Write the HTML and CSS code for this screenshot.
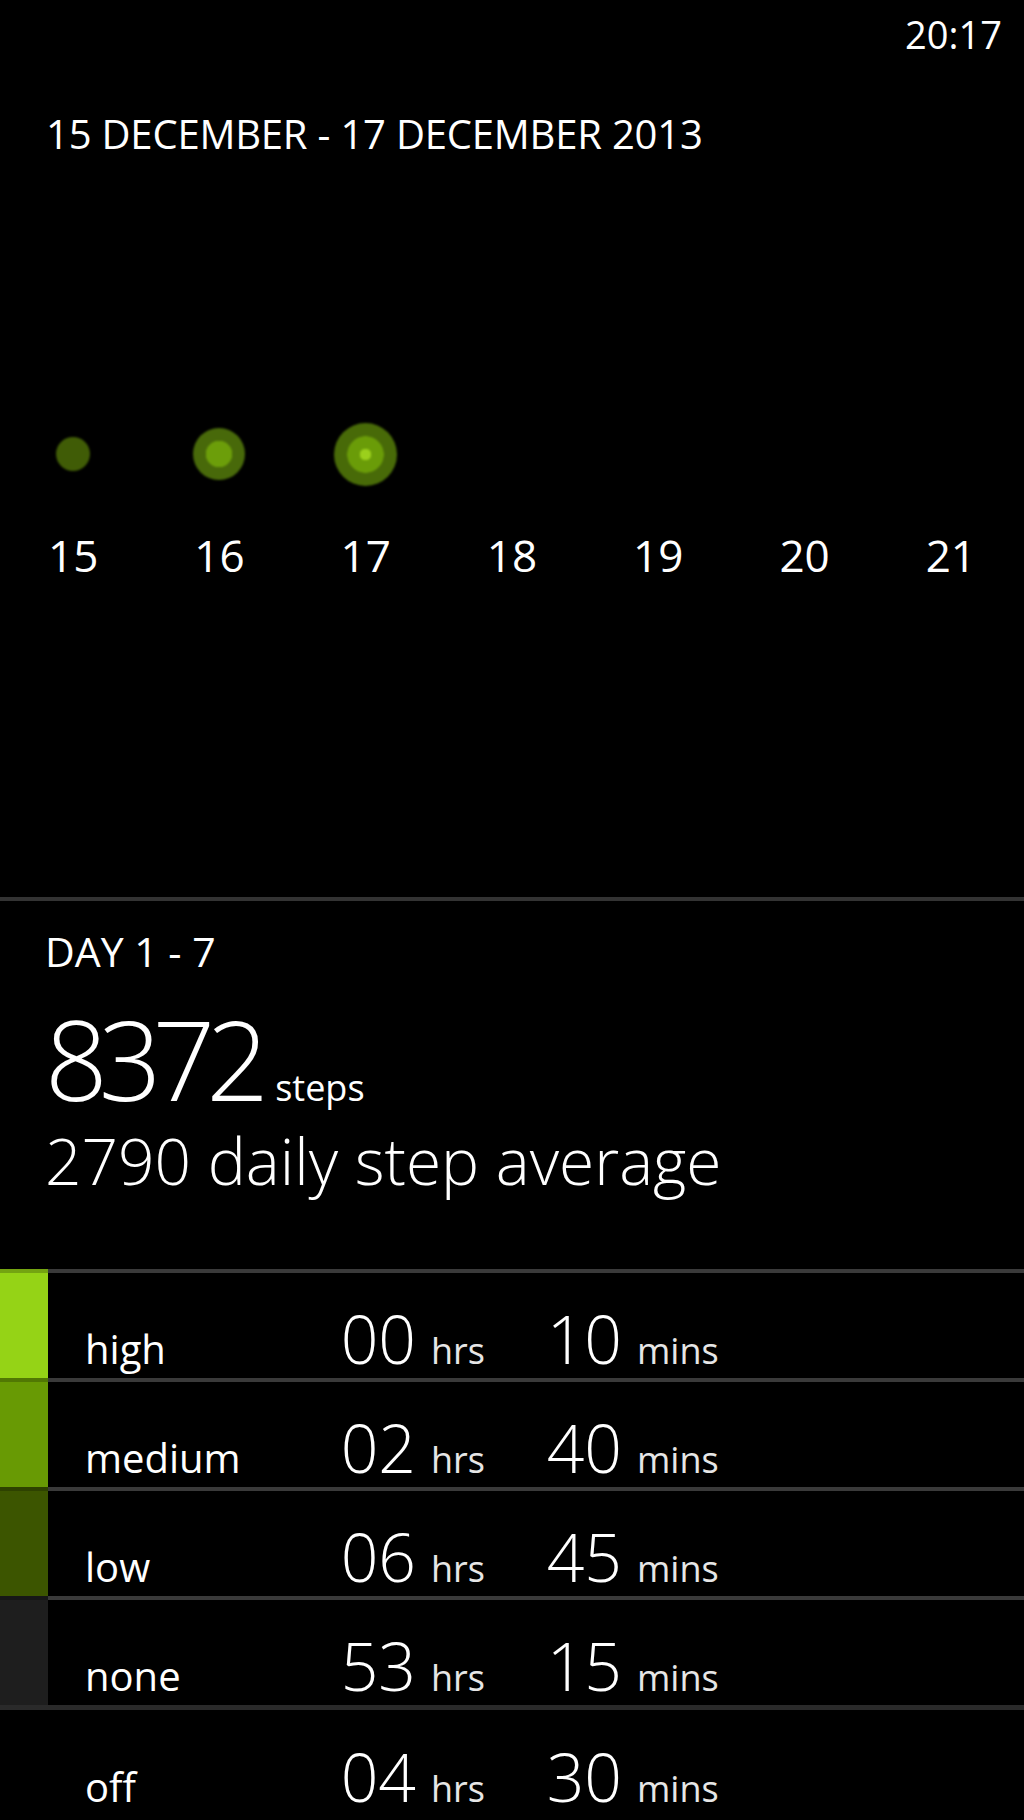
FILE: index.html
```html
<!DOCTYPE html>
<html lang="en">
<head>
  <meta charset="UTF-8">
  <meta name="viewport" content="width=device-width, initial-scale=1.0">
  <title>Activity - Week</title>
  <link rel="stylesheet" href="styles.css">
</head>
<body>
  <div class="phone">
    <div class="status-bar">
      <span class="clock">20:17</span>
    </div>

    <section class="week">
      <h1 class="range">15 DECEMBER - 17 DECEMBER 2013</h1>
      <div class="days">
        <div class="day">
          <div class="dot-cell"><span class="dot dot-1"></span></div>
          <span class="day-num">15</span>
        </div>
        <div class="day">
          <div class="dot-cell"><span class="dot dot-2"></span></div>
          <span class="day-num">16</span>
        </div>
        <div class="day">
          <div class="dot-cell"><span class="dot dot-3"></span></div>
          <span class="day-num">17</span>
        </div>
        <div class="day">
          <div class="dot-cell"></div>
          <span class="day-num">18</span>
        </div>
        <div class="day">
          <div class="dot-cell"></div>
          <span class="day-num">19</span>
        </div>
        <div class="day">
          <div class="dot-cell"></div>
          <span class="day-num">20</span>
        </div>
        <div class="day">
          <div class="dot-cell"></div>
          <span class="day-num">21</span>
        </div>
      </div>
    </section>

    <section class="summary">
      <div class="period">DAY 1 - 7</div>
      <div class="total"><span class="total-num">8372</span><span class="total-unit">steps</span></div>
      <div class="average">2790 daily step average</div>
    </section>

    <section class="activity">
      <div class="row">
        <div class="bar bar-high"></div>
        <div class="row-body">
          <span class="level">high</span>
          <span class="num">00</span><span class="unit unit-hrs">hrs</span>
          <span class="num">10</span><span class="unit unit-mins">mins</span>
        </div>
      </div>
      <div class="row">
        <div class="bar bar-medium"></div>
        <div class="row-body">
          <span class="level">medium</span>
          <span class="num">02</span><span class="unit unit-hrs">hrs</span>
          <span class="num">40</span><span class="unit unit-mins">mins</span>
        </div>
      </div>
      <div class="row">
        <div class="bar bar-low"></div>
        <div class="row-body">
          <span class="level">low</span>
          <span class="num">06</span><span class="unit unit-hrs">hrs</span>
          <span class="num">45</span><span class="unit unit-mins">mins</span>
        </div>
      </div>
      <div class="row">
        <div class="bar bar-none"></div>
        <div class="row-body">
          <span class="level">none</span>
          <span class="num">53</span><span class="unit unit-hrs">hrs</span>
          <span class="num">15</span><span class="unit unit-mins">mins</span>
        </div>
      </div>
      <div class="row row-off">
        <div class="bar"></div>
        <div class="row-body">
          <span class="level">off</span>
          <span class="num">04</span><span class="unit unit-hrs">hrs</span>
          <span class="num">30</span><span class="unit unit-mins">mins</span>
        </div>
      </div>
    </section>
  </div>
</body>
</html>
```

FILE: styles.css
```css
body {
  margin: 0;
  background-color: #000;
  color: #fff;
  font-family: 'Open Sans', 'Noto Sans', sans-serif;
}

.phone {
  width: 1024px;
  min-height: 1820px;
  overflow: hidden;
}

/* status bar */
.status-bar {
  display: flex;
  justify-content: flex-end;
  padding: 15px 22px 0 0;
}

.clock {
  font-size: 38px;
  line-height: 1;
}

/* week chart */
.week {
  padding-bottom: 320px;
  border-bottom: 4px solid #333;
}

.range {
  margin: 61px 0 0 46px;
  font-size: 40px;
  font-weight: 400;
  line-height: 1;
  letter-spacing: -0.2px;
}

.days {
  display: grid;
  grid-template-columns: repeat(7, 1fr);
  margin-top: 265px;
}

.day {
  display: flex;
  flex-direction: column;
  align-items: center;
}

.dot-cell {
  height: 70px;
  display: flex;
  align-items: center;
  justify-content: center;
}

.dot {
  border-radius: 50%;
  filter: blur(0.8px);
}

.dot-1 {
  width: 34px;
  height: 34px;
  background: #405c06;
}

.dot-2 {
  width: 52px;
  height: 52px;
  background: radial-gradient(circle, #6c9e0a 0 13px, #48690a 13.5px);
}

.dot-3 {
  width: 63px;
  height: 63px;
  background: radial-gradient(circle, #9bd01c 0 5.5px, #6a9c08 6px 18px, #486a08 18.5px);
}

.day-num {
  margin-top: 44px;
  font-size: 44px;
  line-height: 1;
}

/* summary */
.summary {
  padding: 30px 0 0 45px;
}

.period {
  font-size: 41px;
  line-height: 1;
}

.total {
  margin-top: 31px;
  line-height: 1;
}

.total-num {
  font-size: 110px;
  font-weight: 300;
  letter-spacing: -9px;
}

.total-unit {
  margin-left: 15px;
  font-size: 36px;
  font-weight: 400;
}

.average {
  margin-top: 16px;
  font-size: 64px;
  font-weight: 300;
  line-height: 1;
}

/* activity levels */
.activity {
  margin-top: 76px;
}

.row {
  display: flex;
  height: 109px;
}

.bar {
  width: 48px;
  border-top: 4px solid rgba(0, 0, 0, 0.22);
}

.bar-high {
  background-color: #95d316;
}

.bar-medium {
  background-color: #689a04;
}

.bar-low {
  background-color: #3c5500;
}

.bar-none {
  background-color: #1e1e1e;
}

.row-body {
  flex: 1;
  display: flex;
  align-items: baseline;
  padding: 32px 0 0 37px;
  border-top: 4px solid #3a3a3a;
}

.row-off {
  border-top: 5px solid #2a2a2a;
}

.row-off .bar {
  border-top: none;
}

.row-off .row-body {
  border-top: none;
  padding-top: 33px;
}

.level {
  width: 205px;
  font-size: 40px;
  line-height: 1;
}

.num {
  width: 126px;
  text-align: right;
  font-size: 66px;
  font-weight: 300;
  line-height: 1;
}

.unit {
  font-size: 36px;
  line-height: 1;
  color: #e6e6e6;
}

.unit-hrs {
  width: 65px;
  padding-left: 15px;
}

.unit-mins {
  padding-left: 15px;
}
```
